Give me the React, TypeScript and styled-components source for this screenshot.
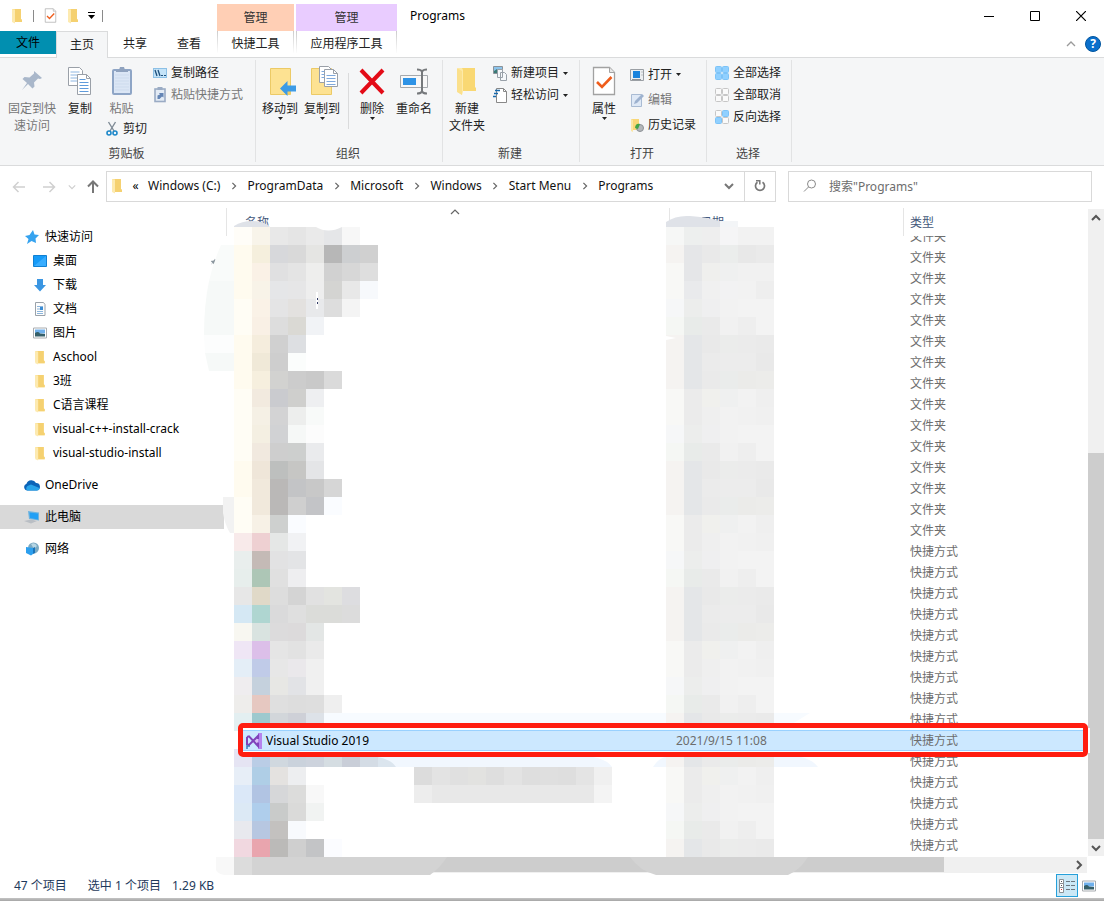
import React from 'react';
import styled, { createGlobalStyle, css } from 'styled-components';

const GlobalStyle = createGlobalStyle`
  *, *::before, *::after { box-sizing: border-box; }
  body { margin: 0; background: #fff; }
  body, button, input, table {
    font-family: "Noto Sans", "Noto Sans CJK SC", sans-serif;
    font-size: 12px;
    line-height: 18px;
    color: #000;
  }
  button { border: 0; padding: 0; background: none; cursor: default; white-space: nowrap; }
  svg { display: block; flex: none; }
`;

/* ---------- icons ---------- */

const FolderIcon = ({ w = 12, h = 16 }: { w?: number; h?: number }) => (
  <svg width={w} height={h} viewBox="0 0 12 16">
    <path d="M1 1h9v10l1 1v2H4L1 13z" fill="#fbdf8c" />
    <path d="M4 1h6v10l1 1v2H4z" fill="#f5d171" />
    <path d="M1 1l3 1v13.500L1 14z" fill="#fdeab0" />
  </svg>
);

const BigFolderIcon = () => (
  <svg width="24" height="32" viewBox="0 0 24 32">
    <path d="M3 3h17v19l1 1v3H8z" fill="#f9d873" />
    <path d="M3 3h4l1 2v22l-1 3-4-3z" fill="#fdeaa8" />
    <path d="M2 3l5 3v24l-5-3z" fill="#fbe08c" />
  </svg>
);

const CheckPageIcon = ({ w = 12, h = 14 }: { w?: number; h?: number }) => (
  <svg width={w} height={h} viewBox="0 0 24 30">
    <path d="M1.500 1.500h16l5 5v22h-21z" fill="#fff" stroke="#a2a2a2" strokeWidth="1.300" />
    <path d="M17.500 1.500v5h5" fill="#e8e8e8" stroke="#a2a2a2" />
    <path d="M5 16l5 5L19.500 11" fill="none" stroke="#ef5d1c" strokeWidth="2.600" />
  </svg>
);

const PinIcon = ({ size = 24, color = '#a9b7ca' }: { size?: number; color?: string }) => (
  <svg width={size} height={size} viewBox="0 0 24 24">
    <path d="M14 2l8 7-2 1-2-.500-4 4 .500 4-2 2-4.500-4.500L2 21l5-7L2.500 10l2-2 5 .500 4.500-4z" fill={color} />
  </svg>
);

const CopyIcon = () => (
  <svg width="28" height="32" viewBox="0 0 28 32">
    <path d="M2.500 2.500h11l3 3v15h-14z" fill="#fff" stroke="#9aa0a8" />
    <path d="M4.500 7h9M4.500 10h9M4.500 13h9M4.500 16h7" stroke="#8db6e2" />
    <path d="M11.500 9.500h9l4 4v16h-13z" fill="#fff" stroke="#9aa0a8" />
    <path d="M20.500 9.500v4h4" fill="none" stroke="#9aa0a8" />
    <path d="M13.500 14.500h6M13.500 17.500h9M13.500 20.500h9M13.500 23.500h9M13.500 26.500h9" stroke="#5f9bdb" />
  </svg>
);

const PasteIcon = () => (
  <svg width="28" height="32" viewBox="0 0 28 32">
    <rect x="5" y="5" width="18" height="24" rx="1" fill="#dbe6f5" stroke="#8ea5c6" strokeWidth="2" />
    <path d="M8 7V5h3l1-3h4l1 3h3v2z" fill="#8fa2be" />
    <path d="M7 10h14M7 13h14M7 16h14M7 19h14M7 22h14M7 25h14" stroke="#cddbed" />
  </svg>
);

const CutIcon = () => (
  <svg width="12" height="16" viewBox="0 0 12 16">
    <path d="M2.500 1L8 10M9.500 1L4 10" stroke="#7f8b96" strokeWidth="1.400" />
    <circle cx="3" cy="12" r="2" fill="none" stroke="#1e88c9" strokeWidth="1.600" />
    <circle cx="9" cy="12" r="2" fill="none" stroke="#1e88c9" strokeWidth="1.600" />
  </svg>
);

const PathIcon = () => (
  <svg width="14" height="16" viewBox="0 0 14 16">
    <rect x=".500" y="3.500" width="13" height="9" fill="#c4e3f8" stroke="#8cc0e6" />
    <path d="M2 5l2 6M5 5l2 6" stroke="#1d4f7c" strokeWidth="1.300" />
    <path d="M8 10.500h5" stroke="#1d4f7c" strokeDasharray="2 1" />
  </svg>
);

const ShortcutPasteIcon = () => (
  <svg width="14" height="16" viewBox="0 0 14 16">
    <rect x="2" y="2" width="10" height="12.500" fill="#e3ebf5" stroke="#9aabc4" strokeWidth="1.600" />
    <rect x="4.500" y="0" width="5" height="3" fill="#9aabc4" />
    <path d="M4.500 12V8.500L7 7.500 6 6h4.500v4.500L9 9.500 6.500 12z" fill="#6485b5" />
  </svg>
);

const MoveToIcon = () => (
  <svg width="32" height="32" viewBox="0 0 32 32">
    <path d="M6.500 3.500h20v26h-20z" fill="#fde292" stroke="#ecca66" />
    <path d="M22 22h4v7h-4z" fill="#f3cc62" />
    <path d="M16 23.500L23.500 16v4.500H32v6h-8.500V31z" fill="#3c9be6" />
  </svg>
);

const CopyToIcon = () => (
  <svg width="32" height="32" viewBox="0 0 32 32">
    <path d="M5.500 3.500h20v26h-20z" fill="#fde292" stroke="#ecca66" />
    <path d="M13.500 1.500h9l3 3v13h-12z" fill="#fff" stroke="#9aa0a8" />
    <path d="M18.500 4.500h9l4 4v13h-13z" fill="#fff" stroke="#9aa0a8" />
    <path d="M27.500 4.500v4h4" fill="none" stroke="#9aa0a8" />
    <path d="M20.500 10.500h9M20.500 13.500h9M20.500 16.500h9M20.500 19.500h9M15.500 6.500h3M15.500 9.500h3M15.500 12.500h3" stroke="#7fa9dc" />
  </svg>
);

const DeleteIcon = () => (
  <svg width="32" height="32" viewBox="0 0 32 32">
    <path d="M5 5L27 28M27 5L5 28" stroke="#e30b17" strokeWidth="4" />
  </svg>
);

const RenameIcon = () => (
  <svg width="32" height="32" viewBox="0 0 32 32">
    <path d="M2.500 10.500h27v12h-27z" fill="#f8f8f8" stroke="#a5a9ad" />
    <path d="M5 13h13v7H5z" fill="#2e93e6" />
    <path d="M19 4.500q4 0 5 2 1-2 5-2M19 28.500q4 0 5-2 1 2 5 2M24 6v21" fill="none" stroke="#76797c" strokeWidth="2" />
  </svg>
);

const NewItemIcon = () => (
  <svg width="14" height="16" viewBox="0 0 14 16">
    <path d="M.500 1.500h9v7h-9z" fill="#8cc4ec" stroke="#8a9299" />
    <path d="M1 6l3-2 3 3v1H1z" fill="#3a7a76" />
    <path d="M4.500 4.500h5v8h-5zM7.500 7.500h4l2 2v6h-6z" fill="#f5f8fb" stroke="#98a0a8" />
  </svg>
);

const EasyAccessIcon = () => (
  <svg width="14" height="16" viewBox="0 0 14 16">
    <path d="M3.500 1.500h7l3 3v11h-10v-14z" fill="#fff" stroke="#888" />
    <path d="M10.500 1.500v3h3" fill="none" stroke="#888" />
    <path d="M2 3.500h5M1 6.500h4M0 9.500h3" stroke="#1769ad" strokeWidth="1.400" />
  </svg>
);

const OpenIcon = () => (
  <svg width="14" height="16" viewBox="0 0 14 16">
    <path d="M.500 2.500h13v11H.500z" fill="#eceff1" stroke="#9a9fa4" />
    <path d="M3 4h7v7H3z" fill="#1a83dc" />
    <path d="M2 12.500h9M11.500 5h1M11.500 8h1" stroke="#8c9196" />
  </svg>
);

const EditIcon = () => (
  <svg width="14" height="16" viewBox="0 0 14 16">
    <path d="M1.500 2.500h10v12h-10z" fill="#dfe9f6" stroke="#a9bbd3" />
    <path d="M4 12l1-3 7-7 2 2-7 7z" fill="#9db2cf" />
  </svg>
);

const HistoryIcon = () => (
  <svg width="14" height="16" viewBox="0 0 14 16">
    <path d="M1 2h8v11H3z" fill="#f8d778" />
    <path d="M1 2l2 1v12l-2-1z" fill="#fbe6a4" />
    <circle cx="10" cy="11" r="3.500" fill="#b3b7bb" stroke="#8d9296" />
    <path d="M5 11c0-4 3-5 5-4l-2 5z" fill="#42a548" />
  </svg>
);

const SelectIcon = ({ on }: { on: [boolean, boolean, boolean, boolean] }) => (
  <svg width="14" height="14" viewBox="0 0 14 14">
    {on.map((f, i) => (
      <rect key={i} x={(i % 2) * 7 + 0.5} y={Math.floor(i / 2) * 7 + 0.5} width="6" height="6" rx="1"
        fill={f ? '#90d0ff' : '#fafafa'} stroke={f ? '#7cc3f7' : '#c6c6c6'} />
    ))}
  </svg>
);

const Caret = () => (
  <svg width="5" height="3" viewBox="0 0 5 3"><path d="M0 0h5L2.500 3z" fill="#222" /></svg>
);

const Chevron = ({ dir, size = 10, color = '#555', stroke = 1.5 }: { dir: 'up' | 'down' | 'right' | 'left'; size?: number; color?: string; stroke?: number }) => {
  const d = { up: 'M1 7l4-4 4 4', down: 'M1 3l4 4 4-4', right: 'M3 1l4 4-4 4', left: 'M7 1L3 5l4 4' }[dir];
  return <svg width={size} height={size} viewBox="0 0 10 10"><path d={d} fill="none" stroke={color} strokeWidth={stroke} /></svg>;
};

const Arrow = ({ dir, color }: { dir: 'left' | 'right' | 'up'; color: string }) => {
  const d = { left: 'M13 7H1.500M6.500 2l-5 5 5 5', right: 'M1 7h11.500M7.500 2l5 5-5 5', up: 'M7 13V2M2 6.500l5-5 5 5' }[dir];
  return <svg width="14" height="14" viewBox="0 0 14 14"><path d={d} fill="none" stroke={color} strokeWidth={dir === 'up' ? 2 : 1.5} /></svg>;
};

const StarIcon = () => (
  <svg width="14" height="14" viewBox="0 0 14 14">
    <path d="M8 0l1.500 4.500L14 5l-3.500 3.500L11 13l-4.500-2L2 14l1.500-5L0 6l4.500-1z" fill="#36a3ef" />
  </svg>
);
const DesktopIcon = () => (
  <svg width="14" height="12" viewBox="0 0 14 12"><path d="M.500.500h13v11H.500z" fill="#169bf8" stroke="#1180d2" /><path d="M1 11L13 1v10z" fill="#38adff" /></svg>
);
const DownloadIcon = () => (
  <svg width="14" height="14" viewBox="0 0 14 14"><path d="M4 1h6v6h3l-6 6.500L1 7h3z" fill="#3a96e2" /></svg>
);
const DocIcon = () => (
  <svg width="14" height="14" viewBox="0 0 14 14">
    <path d="M2.500.500h8l1.500 2v11H2.500z" fill="#fdfdfd" stroke="#9aa2aa" />
    <path d="M4 4.500h6M4 9.500h6M4 11.500h6M4 7h3" stroke="#8bb5dc" /><path d="M7 5h3v3H7z" fill="#3b8cd4" />
  </svg>
);
const PictureIcon = () => (
  <svg width="14" height="12" viewBox="0 0 14 12">
    <path d="M.500 1h13v10H.500z" fill="#fff" stroke="#a8acb0" /><path d="M2 2.500h10v4H2z" fill="#6fb0ec" />
    <path d="M2 6q3-2 5 .500l5 .500v2.500H2z" fill="#355f69" />
  </svg>
);
const CloudIcon = () => (
  <svg width="16" height="12" viewBox="0 0 16 12">
    <path d="M3.500 11.500a3.500 3.500 0 01-1-6.800A5.200 5.200 0 0112 4 3.800 3.800 0 0113 11.500z" fill="#0b64b8" />
    <path d="M3 11.500a3 3 0 01.500-4.500L7 5.500l8.500 3.500a2.500 2.500 0 01-2.500 2.500z" fill="#28a4ea" />
  </svg>
);
const PcIcon = () => (
  <svg width="16" height="14" viewBox="0 0 16 14">
    <path d="M4 1l11 1.500v8L5 9z" fill="#6fb4df" /><path d="M5.500 2.500l8.500 1v6L6 8z" fill="#22a0f5" />
    <path d="M0 11l7-1.500 6 1.500-6 2.500z" fill="#b9bec4" />
  </svg>
);
const NetworkIcon = () => (
  <svg width="16" height="14" viewBox="0 0 16 14">
    <circle cx="9.500" cy="6" r="5.500" fill="#7aa9c2" /><path d="M7 2q4-2 6 2l-3 3z" fill="#b7d6e4" />
    <path d="M2 5l7 1v6l-2 1.500L2 11z" fill="#2c9fee" /><path d="M9 6l2-1v6l-2 1z" fill="#1874bb" />
  </svg>
);
const SearchIcon = () => (
  <svg width="14" height="14" viewBox="0 0 14 14"><circle cx="8.500" cy="5" r="4" fill="none" stroke="#8a8a8a" /><path d="M5.500 8L1 12.500" stroke="#8a8a8a" /></svg>
);
const RefreshIcon = () => (
  <svg width="12" height="12" viewBox="0 0 12 12">
    <path d="M8.500 2.200A4.500 4.500 0 11 3.500 2.200" fill="none" stroke="#777" strokeWidth="1.700" /><path d="M2 .800h3.800v3.800" fill="none" stroke="#777" strokeWidth="1.500" />
  </svg>
);
const VsIcon = () => (
  <svg width="16" height="16" viewBox="0 0 16 16">
    <path d="M12 0h4v16h-4z" fill="#b583ee" /><path d="M12 4v8L7 8z" fill="#d9c0f7" />
    <path d="M1 4l2-.700L12 13V9.500M1 4v7.500l2 .500L12 3v3" fill="none" stroke="#8043bb" strokeWidth="2" />
    <path d="M1 16v-3h3" fill="none" stroke="#3a7bbf" strokeWidth="1.500" />
  </svg>
);
const DetailsIcon = () => (
  <svg width="16" height="14" viewBox="0 0 16 14">
    <path d="M.500.500h4v4h-4zM.500 4.500h4v4h-4zM.500 8.500h4v5h-4z" fill="#fff" stroke="#8b8f93" />
    <path d="M2 2.500h1M2 6.500h1" stroke="#555" /><path d="M2 10.500h1" stroke="#d33" />
    <path d="M7 2.500h4M12 2.500h4M7 6.500h4M12 6.500h4M7 10.500h4M12 10.500h4" stroke="#6c7880" />
  </svg>
);

/* ---------- title bar and tabs ---------- */

const Window = styled.div`display: flex; flex-direction: column; min-height: 100vh; background: #fff;`;

const TitleBar = styled.header`display: flex; height: 58px; border-bottom: 1px solid #dadbdc;`;
const TitleLeft = styled.div`display: flex; flex-direction: column; width: 217px; flex: none;`;
const QuickBar = styled.div`display: flex; align-items: center; height: 31px; flex: none; padding-left: 11px; gap: 10px;`;
const QuickSep = styled.span`width: 1px; height: 12px; background: #8a8a8a;`;
const QuickCaret = styled.button`
  display: flex; flex-direction: column; align-items: center; gap: 2px; margin: 0 -3px 0 -1px;
  &::before { content: ""; width: 7px; height: 1px; background: #000; }
`;
const Tabs = styled.nav`display: flex; height: 26px;`;
const Tab = styled.button<{ $kind?: 'file' | 'active' }>`
  height: 26px; width: 54px; padding-bottom: 1px;
  color: #222;
  ${p => p.$kind === 'file' && css`width: 56px; height: 23px; padding: 0; background: #018fb0; color: #000;`}
  ${p => p.$kind === 'active' && css`
    width: 52px; height: 27px; background: #f5f6f7; border: 1px solid #dadbdc; border-bottom: 0;
  `}
`;
const ContextTab = styled.div<{ $w: number; $bg: string }>`
  display: flex; flex-direction: column; width: ${p => p.$w}px; margin: 4px 2px 0 0; flex: none; color: #333;
  & > span { height: 27px; line-height: 28px; text-align: center; background: ${p => p.$bg}; }
  & > button {
    height: 22px; padding-top: 4px; color: #222;
    border: solid; border-width: 0 1px;
    border-image: linear-gradient(#c9c9c9, #fff) 1;
  }
`;
const WindowTitle = styled.h1`margin: 7px 0 0 11px; font-size: 12px; line-height: 18px; font-weight: 400; flex: 1;`;
const TitleRight = styled.div`display: flex; flex-direction: column; align-items: flex-end;`;
const Controls = styled.div`display: flex; height: 31px;`;
const ControlButton = styled.button`display: grid; place-items: center; width: 46px;`;
const HelpRow = styled.div`display: flex; align-items: center; gap: 9px; height: 26px; padding-right: 3px;`;
const HelpButton = styled.button`
  width: 16px; height: 16px; line-height: 14px; border-radius: 8px; border: 1px solid #00559f;
  background: #0a6fcb; color: #fff; font-weight: 700;
`;

/* ---------- ribbon ---------- */

const Ribbon = styled.section`display: flex; height: 108px; padding: 2px 0 3px; background: #f5f6f7; border-bottom: 1px solid #dadbdc;`;
const Group = styled.div<{ $w: number }>`
  display: flex; flex-direction: column; justify-content: space-between;
  width: ${p => p.$w}px; flex: none; border-right: 1px solid #e2e3e4;
`;
const GroupBody = styled.div<{ $pad?: number }>`display: flex; align-items: flex-start; padding: 2px 0 0 ${p => p.$pad ?? 0}px;`;
const GroupLabel = styled.div`padding-right: 2px; text-align: center; color: #444; line-height: 16px;`;
const BigButton = styled.button<{ $w: number; $off?: boolean }>`
  display: flex; flex-direction: column; align-items: center; width: ${p => p.$w}px; flex: none;
  line-height: 17px; color: ${p => (p.$off ? '#777' : '#222')};
`;
const BigIcon = styled.span`display: grid; place-items: center; height: 36px; margin: 1px 0;`;
const SmallStack = styled.div<{ $pad?: number }>`display: flex; flex-direction: column; padding-left: ${p => p.$pad ?? 0}px;`;
const SmallButton = styled.button<{ $h?: number; $off?: boolean }>`
  display: flex; align-items: center; gap: 4px; height: ${p => p.$h ?? 22}px; color: ${p => (p.$off ? '#777' : '#222')};
`;
const CutButton = styled(SmallButton)`margin: 1px 0 0 6px; gap: 5px;`;
const OrganizeSep = styled.span`width: 1px; height: 56px; margin: 11px 4px 0 5px; background: #dadbdc;`;

/* ---------- address row ---------- */

const AddressRow = styled.div`display: flex; align-items: center; height: 42px; padding: 0 12px 2px;`;
const NavButtons = styled.div`display: flex; align-items: center; width: 94px; flex: none;`;
const NavButton = styled.button<{ $w: number }>`width: ${p => p.$w}px; display: flex; padding-top: 2px;`;
const AddressBox = styled.div`display: flex; align-items: center; flex: 1; height: 31px; padding-left: 4px; border: 1px solid #d9d9d9;`;
const Crumbs = styled.div`display: flex; align-items: center; flex: 1; white-space: nowrap;`;
const Crumb = styled.a`color: #111; text-decoration: none;`;
const CrumbArrow = styled.span<{ $w?: number }>`display: grid; place-items: center; width: ${p => p.$w ?? 27}px;`;
const BoxButton = styled.button<{ $line?: boolean }>`
  display: grid; place-items: center; width: 31px; height: 29px; border-left: ${p => (p.$line ? '1px solid #d9d9d9' : '0')};
`;
const SearchBox = styled.label`
  display: flex; align-items: center; gap: 12px; width: 304px; height: 31px; margin-left: 12px; padding-left: 14px;
  border: 1px solid #d9d9d9;
`;
const SearchInput = styled.input`
  flex: 1; min-width: 0; border: 0; outline: 0; padding: 1px 0 0; background: none;
  &::placeholder { color: #6d6d6d; opacity: 1; }
`;

/* ---------- body ---------- */

const Body = styled.main`display: flex;`;
const Sidebar = styled.nav`width: 224px; flex: none; padding-top: 17px;`;
const SideItem = styled.a<{ $level?: number; $gap?: boolean; $active?: boolean }>`
  display: flex; align-items: center; height: 24px; padding: 0 6px 0 ${p => (p.$level ? 32 : 24)}px;
  margin-top: ${p => (p.$gap ? 8 : 0)}px; color: #000; text-decoration: none; white-space: nowrap;
  background: ${p => (p.$active ? '#d9d9d9' : 'none')};
`;
const SideIcon = styled.span<{ $w: number }>`display: grid; place-items: center; width: ${p => p.$w}px; margin-right: 5px;`;
const SidePin = styled.span`margin-left: auto; padding-top: 2px;`;
const Main = styled.div`flex: 1; min-width: 0;`;
const ListArea = styled.div`display: flex; position: relative;`;

const FileTable = styled.table`display: block; flex: 1; min-width: 0; padding-left: 2px; border-collapse: collapse;`;
const Head = styled.thead`display: block; position: relative; z-index: 1; background: #fff;`;
const Rows = styled.tbody`display: block; margin-top: -10px;`;
const columns = css`display: grid; grid-template-columns: minmax(0, 1fr) 234px 185px;`;
const HeadRow = styled.tr`${columns} height: 28px;`;
const HeadCell = styled.th<{ $pad: number }>`
  position: relative; padding: 8px 0 0 ${p => p.$pad}px; text-align: left; font-weight: 400; color: #44587a;
  line-height: 14px; border-left: 1px solid #e5e5e5;
`;
const SortMark = styled.span`position: absolute; top: -1px; left: 50%; margin-left: 2px;`;
const Row = styled.tr`${columns} height: 21px; color: #6d6d6d;`;
const SelectedRow = styled(Row)`
  position: relative; z-index: 2;
  &::before {
    content: ""; position: absolute; z-index: -1; inset: 0 0 0 17px;
    background: #cce8ff; border: solid #99d1ff; border-width: 1px 0; box-shadow: 0 0 0 2px #fff;
  }
  &::after {
    content: ""; position: absolute; inset: -7px 0 -6px 12px; border: 5px solid #ff1d10; border-radius: 5px;
  }
`;
const Cell = styled.td<{ $pad?: number }>`
  display: flex; align-items: center; gap: 4px; padding: 1px 0 0 ${p => p.$pad ?? 7}px; line-height: 16px; white-space: nowrap;
`;
const NameCell = styled(Cell)`color: #000; padding-left: 20px;`;

const VScroll = styled.div`
  display: flex; flex-direction: column; width: 16px; flex: none; margin-top: 1px; background: #f0f0f0;
`;
const ScrollButton = styled.button`display: grid; place-items: center; width: 16px; height: 17px;`;
const VTrack = styled.div`flex: 1; display: flex; flex-direction: column; justify-content: flex-end;`;
const VThumb = styled.div`height: 63%; background: #cdcdcd;`;
const HScroll = styled.div`display: flex; align-items: center; height: 16px; margin: 1px 17px 0 0; background: #f0f0f0;`;
const HTrack = styled.div`flex: 1; height: 15px; align-self: flex-start; padding-left: 2px;`;
const HThumb = styled.div`width: 85%; height: 15px; background: #cdcdcd;`;

const NameCover = styled.svg`position: absolute; z-index: 1; left: -24px; top: 0; pointer-events: none;`;
const DateCover = styled.svg`position: absolute; z-index: 1; right: 244px; top: 0; pointer-events: none;`;

const StatusBar = styled.footer`
  display: flex; align-items: center; height: 24px; padding: 1px 4px 0 14px; color: #1e395b; white-space: pre;
`;
const StatusText = styled.span`margin-right: 21px;`;
const StatusSize = styled.span`margin-left: -10px; flex: 1;`;
const ViewButton = styled.button<{ $on?: boolean }>`
  display: grid; place-items: center; width: 22px; height: 23px;
  ${p => p.$on && css`background: #cbe8f6; border: 1px solid #26a0da;`}
`;
const BottomEdge = styled.div`height: 3px; margin-top: 1px; background: linear-gradient(#c4c4c4, #a6a6a6);`;

/* ---------- censored areas ---------- */

const CELL = 18;
const TOP = 227;

const nameCells: string[] = [
  'fffdf8 f8f4ea e8e8e8 e5e5e5 eaeaea e5e6e8 f7f7f7',
  'fffbef f5efdd d7d8db d9d9d9 e5e5e3 b7b7b7 cdcfd1 d0d0d0',
  'fffbef faf1e6 e0e0e1 e4e4e4 eeeeed d1d1d1 d7d7d7 dedede',
  'fffbef f8f3e8 e5e6e8 e6e6e7 eeeeee d4d4d2 e8e8e8 f7f9fc',
  'fffdf5 faf2e7 e4e4e5 e3e1df e8e9eb dddddd f4f4f4',
  'fffdf5 f9f0e5 dddddd dad9d4 f1f3f6',
  'fffbef f5eddd d0d0d0 dddfe2',
  'fffbef f0e9d8 cecece fbfdfc',
  'fffbef f6efde d2d2d0 cccccc c9c9c9 dadada',
  'fffdf5 f2eadf cacbcf cfcfcd eeeff1',
  'fffdf5 f5f0e5 d3d3d4 edeeed f8faf9',
  'fffdf5 f4efe2 d1d2d4 f6f8f7 fcfcfc',
  'fffdf5 f1e9df cecece cdcfce eaebed',
  'fffbef efe6d9 bdbfbe c6c6c4 e4e5e7',
  'fffbef f1e9dc bab8b7 c3c4c6 c8c8c8 d6d6d6',
  'fffdf5 f1e9dc bab8b7 cfcfcf c3c4c7 fafcff',
  'fffdf5 f7f1e6 ced0cf fafcff',
  'f8eaea eed0d2 e5e7e6 f1f2f4',
  'e9eeed c4bab6 e2e2e3 e3e4e6',
  'e7eeec adc6b6 e0e0e0 eeeef0',
  'e7e7e7 e0d9c8 dddddd d4d4d4 e1e1e1 e3e4e0 dddde0',
  'd5e8f4 afd6d1 dadadb dfdfdf dbdcd9 dbdcd9 dcdcdc',
  'f8f7f1 d9e3e0 dcdbdc dcdadb e3e6e5',
  'efe6f5 dcbfe9 e5e5e5 e2e2e2 eaeaea',
  'e4eef7 c0cbe8 e7e7e7 eae8eb f0f0f0',
  'efedef c5d1dd e7e7e4 e2e3e6 f0f0f0',
  'eeedeb e6c8c1 dfdfdf dddddd dedede efefef',
  'e3eff1 9dc9ce d2d6da ced0d7 dde2e8 f7fbff f7fbff',
  '',
  'e5e4f3 bacde6 d0d8df cad2dc cdd3dd d5dde2 c9ced8 d4dce5',
  'e7eef7 afcee6 e4e2e0 edeef0',
  'dbe8f8 b1c4e3 d6d7d9 dcdcdb f8f8f8',
  'dce9f5 afceec c9cbca dadad9 f1f3f2',
  'e8e9ee b7c7e1 c3c1bf f8fafd',
  'f1d8e0 e9a5ae bbbab8 cfcfcf c3c4c6 fbfcff',
];

const dateCycle: string[] = [
  'f8f8f6 ebebeb f0f0ed eff0f0 f2f2f2 efefef',
  'f8f8f6 ebebeb efefef f2f2f2 f1f1f1 f0f0f0',
  'f6f7f8 ecedec efeff0 f2f2f2 f3f3f3 f3f3f3',
  'f5f7f4 e8ebe9 eaeaea f1f1f1 eeeeee f3f3f3',
  'f5f3f1 e4e6e8 e9e9e9 ebeceb ebebeb eaeaea',
  'f5f3f1 e4e6e8 ebebeb ececec ececec e9e9e9',
  'f5f3f1 e4e6e8 eaeaea eaeceb ebebe9 ececea',
];
const dateTop = [
  'f6f7f6 edefee eeeeee f5f5f6 f2f2f2 f2f2f2',
  'f5f3f1 e5e6e8 e9e9e9 ebedec e8e8e8 eaeaea',
  'f8f8f6 e5e6e8 efefed eff0f0 f1f1f1 f1f1f1',
  'f8f8f6 e9eaec f0f0f0 f2f2f3 f2f2f2 eeeeee',
];
const dateCells = nameCells.map((_, i) => dateTop[i] ?? dateCycle[(i + 5) % 7]);

const barCells = [
  'dcdcdc e3e3e3 e0e0e0 e2e2e0 dedede e3e3e3 dedede dfdfdf dedede e4e4e4 f0f0f0',
  'ededed e8e8e8 e8e8e8 e8e8e8 e8e8e8 e8e8e8 e8e8e8 e8e8e8 e8e8e8 e8e8e8 f4f4f4',
];

const Mosaic = ({ x, y, rows }: { x: number; y: number; rows: string[] }) => (
  <g shapeRendering="crispEdges">
    {rows.flatMap((row, r) =>
      row.split(' ').filter(Boolean).map((c, i) => (
        <rect key={`${r}-${i}`} x={x + i * CELL} y={y + r * CELL} width={CELL} height={CELL} fill={`#${c}`} />
      )),
    )}
  </g>
);

const NameCensor = () => (
  <NameCover width="620" height="670" viewBox="200 208 620 670" aria-hidden="true">
    <path d="M234 226q8-5 18-5 12 0 18 6h-36z" fill="#dfe2e8" />
    <path d="M221 245h13v36h-25q4-18 12-36z" fill="#f9fbfa" />
    <path d="M209 281h25v54h-30q0-30 5-54z" fill="#f6f9f8" />
    <path d="M204 335h30v18h-29z" fill="#fcfdfd" />
    <path d="M205 353h29v18h-25z" fill="#f6f9f8" />
    <path d="M223 497h11v36h-4q-5-8-7-20z" fill="#f2f2f2" />
    <path d="M324 713h486l-18 11H324z" fill="#f7fbff" />
    <path d="M243 757h350q15 3 19 10H396z" fill="#f1f7fe" />
    <path d="M653 767q5-8 12-10h136q12 3 17 10z" fill="#f1f7fe" />
    <Mosaic x={234} y={TOP} rows={nameCells} />
    <path d="M316 227q12 7 26 0z" fill="#fff" />
    <path d="M378 757q14 3 18 10h-18z" fill="#dbe5ee" />
    <Mosaic x={414} y={767} rows={barCells} />
    <path d="M317 292v17" stroke="#fff" strokeWidth="2" />
    <path d="M317.500 298v2M317.500 302v2" stroke="#333c66" />
    <path d="M216 857h18v18h-10q-8-2-8-6z" fill="#f8f8f8" />
    <path d="M234 857h18v18h-18z" fill="#dcdcdc" />
    <path d="M252 857h195q-7 11-17 18H252z" fill="#d3d3d3" />
  </NameCover>
);

const DateCensor = () => (
  <DateCover width="240" height="670" viewBox="620 208 240 670" aria-hidden="true">
    <path d="M672 214h27v13h-27z" fill="#fff" />
    <path d="M666 227v-5q10-7 24-6 16 1 30 5v6z" fill="#dfe2e8" />
    <path d="M720 221h18v6h-18z" fill="#f3f5f7" />
    <Mosaic x={666} y={TOP} rows={dateCells} />
    <path d="M666 336l10 2-10 2z" fill="#fff" />
    <path d="M630 857h178q-8 13-20 18H656q-16-4-26-18z" fill="#d3d3d3" />
  </DateCover>
);

/* ---------- data ---------- */

const crumbs = ['Windows (C:)', 'ProgramData', 'Microsoft', 'Windows', 'Start Menu', 'Programs'];

const quickAccess: { name: string; icon: React.ReactNode; pin?: boolean }[] = [
  { name: '桌面', icon: <DesktopIcon />, pin: true },
  { name: '下载', icon: <DownloadIcon /> },
  { name: '文档', icon: <DocIcon /> },
  { name: '图片', icon: <PictureIcon /> },
  { name: 'Aschool', icon: <FolderIcon w={12} h={15} /> },
  { name: '3班', icon: <FolderIcon w={12} h={15} /> },
  { name: 'C语言课程', icon: <FolderIcon w={12} h={15} /> },
  { name: 'visual-c++-install-crack', icon: <FolderIcon w={12} h={15} /> },
  { name: 'visual-studio-install', icon: <FolderIcon w={12} h={15} /> },
];

const files = Array.from({ length: 30 }, (_, i) => ({
  type: i < 15 ? '文件夹' : '快捷方式',
  selected: i === 24,
}));

export default function App() {
  return (
    <Window>
      <GlobalStyle />
      <TitleBar>
        <TitleLeft>
          <QuickBar>
            <FolderIcon />
            <QuickSep />
            <CheckPageIcon w={13} h={15} />
            <FolderIcon />
            <QuickCaret aria-label="自定义快速访问工具栏">
              <svg width="7" height="4" viewBox="0 0 7 4"><path d="M0 0h7L3.500 4z" /></svg>
            </QuickCaret>
            <QuickSep />
          </QuickBar>
          <Tabs>
            <Tab $kind="file">文件</Tab>
            <Tab $kind="active">主页</Tab>
            <Tab>共享</Tab>
            <Tab>查看</Tab>
          </Tabs>
        </TitleLeft>
        <ContextTab $w={77} $bg="#ffcfb5"><span>管理</span><button>快捷工具</button></ContextTab>
        <ContextTab $w={101} $bg="#e9ccff"><span>管理</span><button>应用程序工具</button></ContextTab>
        <WindowTitle>Programs</WindowTitle>
        <TitleRight>
          <Controls>
            <ControlButton aria-label="最小化"><svg width="10" height="10"><path d="M0 5.500h10" stroke="#000" /></svg></ControlButton>
            <ControlButton aria-label="最大化"><svg width="10" height="10"><path d="M.5.500h9v9h-9z" fill="none" stroke="#000" /></svg></ControlButton>
            <ControlButton aria-label="关闭"><svg width="10" height="10"><path d="M0 0l10 10M10 0L0 10" stroke="#000" strokeWidth="1.200" /></svg></ControlButton>
          </Controls>
          <HelpRow>
            <button aria-label="折叠功能区"><Chevron dir="up" color="#9a9a9a" stroke={1.3} /></button>
            <HelpButton>?</HelpButton>
          </HelpRow>
        </TitleRight>
      </TitleBar>

      <Ribbon>
        <Group $w={256}>
          <GroupBody>
            <BigButton $w={64} $off><BigIcon><PinIcon /></BigIcon>固定到快<br />速访问</BigButton>
            <BigButton $w={32}><BigIcon><CopyIcon /></BigIcon>复制</BigButton>
            <SmallStack $pad={4}>
              <BigButton $w={43} $off><BigIcon><PasteIcon /></BigIcon>粘贴</BigButton>
              <CutButton><CutIcon />剪切</CutButton>
            </SmallStack>
            <SmallStack $pad={6}>
              <SmallButton><PathIcon />复制路径</SmallButton>
              <SmallButton $off><ShortcutPasteIcon />粘贴快捷方式</SmallButton>
            </SmallStack>
          </GroupBody>
          <GroupLabel>剪贴板</GroupLabel>
        </Group>
        <Group $w={187}>
          <GroupBody $pad={3}>
            <BigButton $w={42}><BigIcon><MoveToIcon /></BigIcon>移动到<Caret /></BigButton>
            <BigButton $w={42}><BigIcon><CopyToIcon /></BigIcon>复制到<Caret /></BigButton>
            <OrganizeSep />
            <BigButton $w={38}><BigIcon><DeleteIcon /></BigIcon>删除<Caret /></BigButton>
            <BigButton $w={46}><BigIcon><RenameIcon /></BigIcon>重命名</BigButton>
          </GroupBody>
          <GroupLabel>组织</GroupLabel>
        </Group>
        <Group $w={137}>
          <GroupBody $pad={1}>
            <BigButton $w={46}><BigIcon><BigFolderIcon /></BigIcon>新建<br />文件夹</BigButton>
            <SmallStack $pad={3}>
              <SmallButton><NewItemIcon />新建项目<Caret /></SmallButton>
              <SmallButton><EasyAccessIcon />轻松访问<Caret /></SmallButton>
            </SmallStack>
          </GroupBody>
          <GroupLabel>新建</GroupLabel>
        </Group>
        <Group $w={127}>
          <GroupBody $pad={4}>
            <BigButton $w={40}><BigIcon><CheckPageIcon w={24} h={30} /></BigIcon>属性<Caret /></BigButton>
            <SmallStack $pad={6}>
              <SmallButton $h={25}><OpenIcon />打开<Caret /></SmallButton>
              <SmallButton $h={25} $off><EditIcon />编辑</SmallButton>
              <SmallButton $h={25}><HistoryIcon />历史记录</SmallButton>
            </SmallStack>
          </GroupBody>
          <GroupLabel>打开</GroupLabel>
        </Group>
        <Group $w={85}>
          <GroupBody $pad={8}>
            <SmallStack>
              <SmallButton><SelectIcon on={[true, true, true, true]} />全部选择</SmallButton>
              <SmallButton><SelectIcon on={[false, false, false, false]} />全部取消</SmallButton>
              <SmallButton><SelectIcon on={[false, true, true, false]} />反向选择</SmallButton>
            </SmallStack>
          </GroupBody>
          <GroupLabel>选择</GroupLabel>
        </Group>
      </Ribbon>

      <AddressRow>
        <NavButtons>
          <NavButton $w={30} aria-label="后退"><Arrow dir="left" color="#d0d0d0" /></NavButton>
          <NavButton $w={26} aria-label="前进"><Arrow dir="right" color="#d0d0d0" /></NavButton>
          <NavButton $w={18} aria-label="最近位置"><Chevron dir="down" size={8} color="#cfcfcf" /></NavButton>
          <NavButton $w={20} aria-label="上移"><Arrow dir="up" color="#777" /></NavButton>
        </NavButtons>
        <AddressBox>
          <FolderIcon />
          <Crumbs>
            <CrumbArrow $w={25}>«</CrumbArrow>
            {crumbs.map((c, i) => (
              <React.Fragment key={c}>
                {i > 0 && <CrumbArrow><Chevron dir="right" size={8} color="#666" /></CrumbArrow>}
                <Crumb href="#">{c}</Crumb>
              </React.Fragment>
            ))}
          </Crumbs>
          <BoxButton aria-label="以前的位置"><Chevron dir="down" color="#777" stroke={2} /></BoxButton>
          <BoxButton $line aria-label="刷新"><RefreshIcon /></BoxButton>
        </AddressBox>
        <SearchBox>
          <SearchIcon />
          <SearchInput placeholder={'搜索"Programs"'} aria-label="搜索" />
        </SearchBox>
      </AddressRow>

      <Body>
        <Sidebar>
          <SideItem href="#"><SideIcon $w={16}><StarIcon /></SideIcon>快速访问</SideItem>
          {quickAccess.map(q => (
            <SideItem key={q.name} href="#" $level={1}>
              <SideIcon $w={16}>{q.icon}</SideIcon>{q.name}
              {q.pin && <SidePin><PinIcon size={8} color="#8a959d" /></SidePin>}
            </SideItem>
          ))}
          <SideItem href="#" $gap><SideIcon $w={16}><CloudIcon /></SideIcon>OneDrive</SideItem>
          <SideItem href="#" $gap $active><SideIcon $w={16}><PcIcon /></SideIcon>此电脑</SideItem>
          <SideItem href="#" $gap><SideIcon $w={16}><NetworkIcon /></SideIcon>网络</SideItem>
        </Sidebar>
        <Main>
          <ListArea>
            <FileTable>
              <Head>
                <HeadRow>
                  <HeadCell $pad={18}>名称<SortMark><Chevron dir="up" color="#666" stroke={1.2} /></SortMark></HeadCell>
                  <HeadCell $pad={6}>修改日期</HeadCell>
                  <HeadCell $pad={6}>类型</HeadCell>
                </HeadRow>
              </Head>
              <Rows>
                {files.map((f, i) =>
                  f.selected ? (
                    <SelectedRow key={i}>
                      <NameCell><VsIcon />Visual Studio 2019</NameCell>
                      <Cell>2021/9/15 11:08</Cell>
                      <Cell>{f.type}</Cell>
                    </SelectedRow>
                  ) : (
                    <Row key={i}><Cell /><Cell /><Cell>{f.type}</Cell></Row>
                  ),
                )}
              </Rows>
            </FileTable>
            <VScroll>
              <ScrollButton aria-label="向上滚动"><Chevron dir="up" stroke={2} /></ScrollButton>
              <VTrack><VThumb /></VTrack>
              <ScrollButton aria-label="向下滚动"><Chevron dir="down" stroke={2} /></ScrollButton>
            </VScroll>
            <NameCensor />
            <DateCensor />
          </ListArea>
          <HScroll>
            <HTrack><HThumb /></HTrack>
            <ScrollButton aria-label="向右滚动"><Chevron dir="right" stroke={2} /></ScrollButton>
          </HScroll>
        </Main>
      </Body>

      <StatusBar>
        <StatusText>47 个项目</StatusText>
        <StatusText>选中 1 个项目</StatusText>
        <StatusSize>1.29 KB</StatusSize>
        <ViewButton $on aria-label="详细信息"><DetailsIcon /></ViewButton>
        <ViewButton aria-label="大图标"><PictureIcon /></ViewButton>
      </StatusBar>
      <BottomEdge />
    </Window>
  );
}
